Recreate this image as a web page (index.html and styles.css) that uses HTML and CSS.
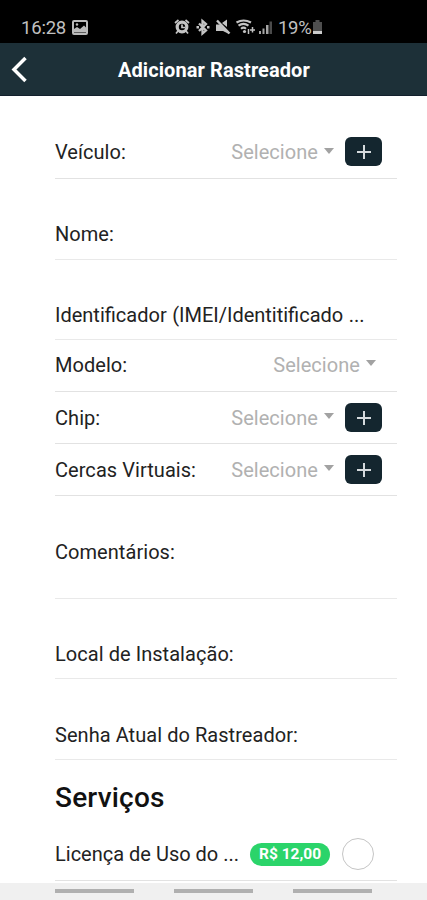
FILE: index.html
```html
<!DOCTYPE html>
<html lang="pt-BR">
<head>
<meta charset="utf-8">
<title>Adicionar Rastreador</title>
<link rel="stylesheet" href="styles.css">
</head>
<body>
<div class="status">
  <span class="clock">16:28</span>
  <svg class="photo" width="16" height="15" viewBox="0 0 16 15"><rect x="1" y="1" width="14" height="13" rx="1" fill="none" stroke="#bbb" stroke-width="2"/><path d="M2 12.500V9l3-2 3 2 4-3.500 2 2v5z" fill="#bbb"/><circle cx="5" cy="4.500" r="1.200" fill="#bbb"/></svg>
  <svg class="indicators" width="104" height="18" viewBox="0 0 104 18">
    <g fill="none" stroke="#c4c4c4" stroke-width="1.700">
      <circle cx="8" cy="9" r="4.800" stroke-width="3.200"/><path d="M8 6.500v3h3M1 5l3.500-3M15 5l-3.500-3M4 13l-2 2.500M12 13l2 2.500"/>
      <path d="M25 5.500l7 7-3.500 3V3L32 6l-7 7" stroke-width="2.300"/>
      <path d="M22.500 9.200h2.500M33 9.200h2.500" stroke-width="2.400"/>
      <path d="M43 2.500l12.500 13" stroke-width="2.400"/>
      <path d="M62.500 4.500q7-4 14.500 0M64.500 7.600q5-3.500 10 0M67 10.700q2.500-2 5 0" stroke-width="2.100"/>
      <path d="M78.500 9v5.500M76 12h5M74.500 11v5" stroke-width="1.500"/>
    </g>
    <path d="M42 6.500h4l9 8.500v1l-6-3h-7zM48 5l5-3.500V9z" fill="#c4c4c4"/><circle cx="70.500" cy="13.500" r="1.600" fill="#c4c4c4"/>
    <path d="M85 13h2v3h-2zM88.500 10.500h2V16h-2zM92 7h2.500v9H92z" fill="#a5a5a5"/><path d="M95.500 3.500h2.500V16h-2.500z" fill="#4b4b4b"/>
  </svg>
  <span class="percent">19%</span>
  <svg width="12" height="16" viewBox="0 0 12 16"><path d="M3.500 1h4v2H10v9H1V3h2.500z" fill="#4e4e4e"/><path d="M1 12h9v3H1z" fill="#ccc"/></svg>
</div>
<header class="bar">
  <svg class="back" width="17" height="27" viewBox="0 0 17 27"><path d="M14.500 2L3 13.500 14.500 25" fill="none" stroke="#fff" stroke-width="3.500"/></svg>
  <h1 class="title">Adicionar Rastreador</h1>
</header>
<main class="form">
  <div class="row first"><span class="label">Veículo:</span><span class="select">Selecione</span><i class="caret"></i><button class="add" aria-label="Adicionar"></button></div>
  <div class="row input"><span class="label">Nome:</span></div>
  <div class="row input"><span class="label joined">Identificador (IMEI/Identitificado ...</span></div>
  <div class="row model"><span class="label">Modelo:</span><span class="select">Selecione</span><i class="caret last"></i></div>
  <div class="row"><span class="label">Chip:</span><span class="select">Selecione</span><i class="caret"></i><button class="add" aria-label="Adicionar"></button></div>
  <div class="row"><span class="label">Cercas Virtuais:</span><span class="select">Selecione</span><i class="caret"></i><button class="add" aria-label="Adicionar"></button></div>
  <div class="row input area"><span class="label">Comentários:</span></div>
  <div class="row input"><span class="label">Local de Instalação:</span></div>
  <div class="row input password"><span class="label">Senha Atual do Rastreador:</span></div>
  <h2 class="section">Serviços</h2>
  <div class="row service"><span class="label">Licença de Uso do ...</span><span class="price">R$ 12,00</span><span class="radio"></span></div>
</main>
<nav class="nav"><i></i><i></i><i></i></nav>
</body>
</html>
```

FILE: styles.css
```css
* { box-sizing: border-box; }
body {
  margin: 0;
  height: 900px;
  overflow: hidden;
  display: flex;
  flex-direction: column;
  background: #fff;
  color: #222;
  font: 20px/24px Roboto, sans-serif;
}
.status {
  height: 43px;
  flex: none;
  display: flex;
  align-items: center;
  padding: 11px 0 0 21px;
  background: #000;
  color: #c0c0c0;
}
.clock { width: 45px; padding-top: 1px; font-size: 18.500px; letter-spacing: -.2px; }
.photo { margin-left: 6px; }
.indicators { margin-left: 86px; }
.percent { width: 33px; margin: 0 1px 0 0; padding-top: 1px; font-size: 18.500px; letter-spacing: -.3px; }
.bar {
  height: 53px;
  flex: none;
  display: grid;
  grid-template-columns: 118px 1fr;
  align-items: center;
  background: #1d3038;
  border-bottom: 1px solid #13202d;
  color: #fff;
}
.back { margin: 1px 0 0 11px; }
.title { margin: 1px 0 0; font-size: 20px; line-height: 24px; font-weight: 700; letter-spacing: .08px; }
.form { flex: 1; min-height: 0; padding: 31px 30px 0 55px; }
.row {
  height: 52px;
  display: flex;
  align-items: center;
  padding: 0 15px 0 0;
  border-bottom: 1px solid #e2e2e2;
}
.first { padding-bottom: 1px; }
.first .add { margin-top: -1px; }
.input { height: 80px; padding-top: 30px; border-color: #e9e9e9; }
.first + .input { height: 81px; padding-top: 29px; }
.area { height: 103px; padding: 28px 0 18px; }
.password { height: 81px; padding-top: 31px; }
.model { padding-bottom: 2px; }
.label { white-space: nowrap; letter-spacing: .05px; }
.joined { letter-spacing: 0; word-spacing: .5px; }
.select { margin-left: auto; color: #b1b1b1; letter-spacing: .05px; }
.caret {
  margin: -3px 11px 0 6px;
  border: 5.500px solid transparent;
  border-top: 6px solid #a2a2a2;
  border-bottom: 0;
}
.last { margin-right: 6px; }
.add {
  position: relative;
  width: 37px;
  height: 29px;
  margin: 0;
  padding: 0;
  border: 0;
  border-radius: 6px;
  background: #14262f;
}
.add::before, .add::after { content: ""; position: absolute; background: #d5dadd; }
.add::before { width: 14px; height: 2px; left: 12px; top: 14px; }
.add::after { width: 2px; height: 14px; left: 18px; top: 8px; }
.section { height: 68px; margin: 0; padding-top: 21px; font-size: 28px; line-height: 34px; font-weight: 500; letter-spacing: .2px; color: #111; }
.service { height: 53px; }
.service .label { letter-spacing: 0; }
.price {
  width: 80px;
  height: 23px;
  margin-left: auto;
  border-radius: 12px;
  background: #2bd46a;
  color: #fff;
  font-size: 15.500px;
  line-height: 23px;
  font-weight: 700;
  text-align: center;
}
.radio { width: 32px; height: 32px; margin: 0 8px 0 12px; border: 1px solid #c5c5c5; border-radius: 50%; }
.nav { height: 17px; flex: none; display: flex; gap: 40px; padding: 6px 0 0 55px; background: #f0f0f0; }
.nav i { width: 79px; height: 4px; background: #b0b0b0; }
```
